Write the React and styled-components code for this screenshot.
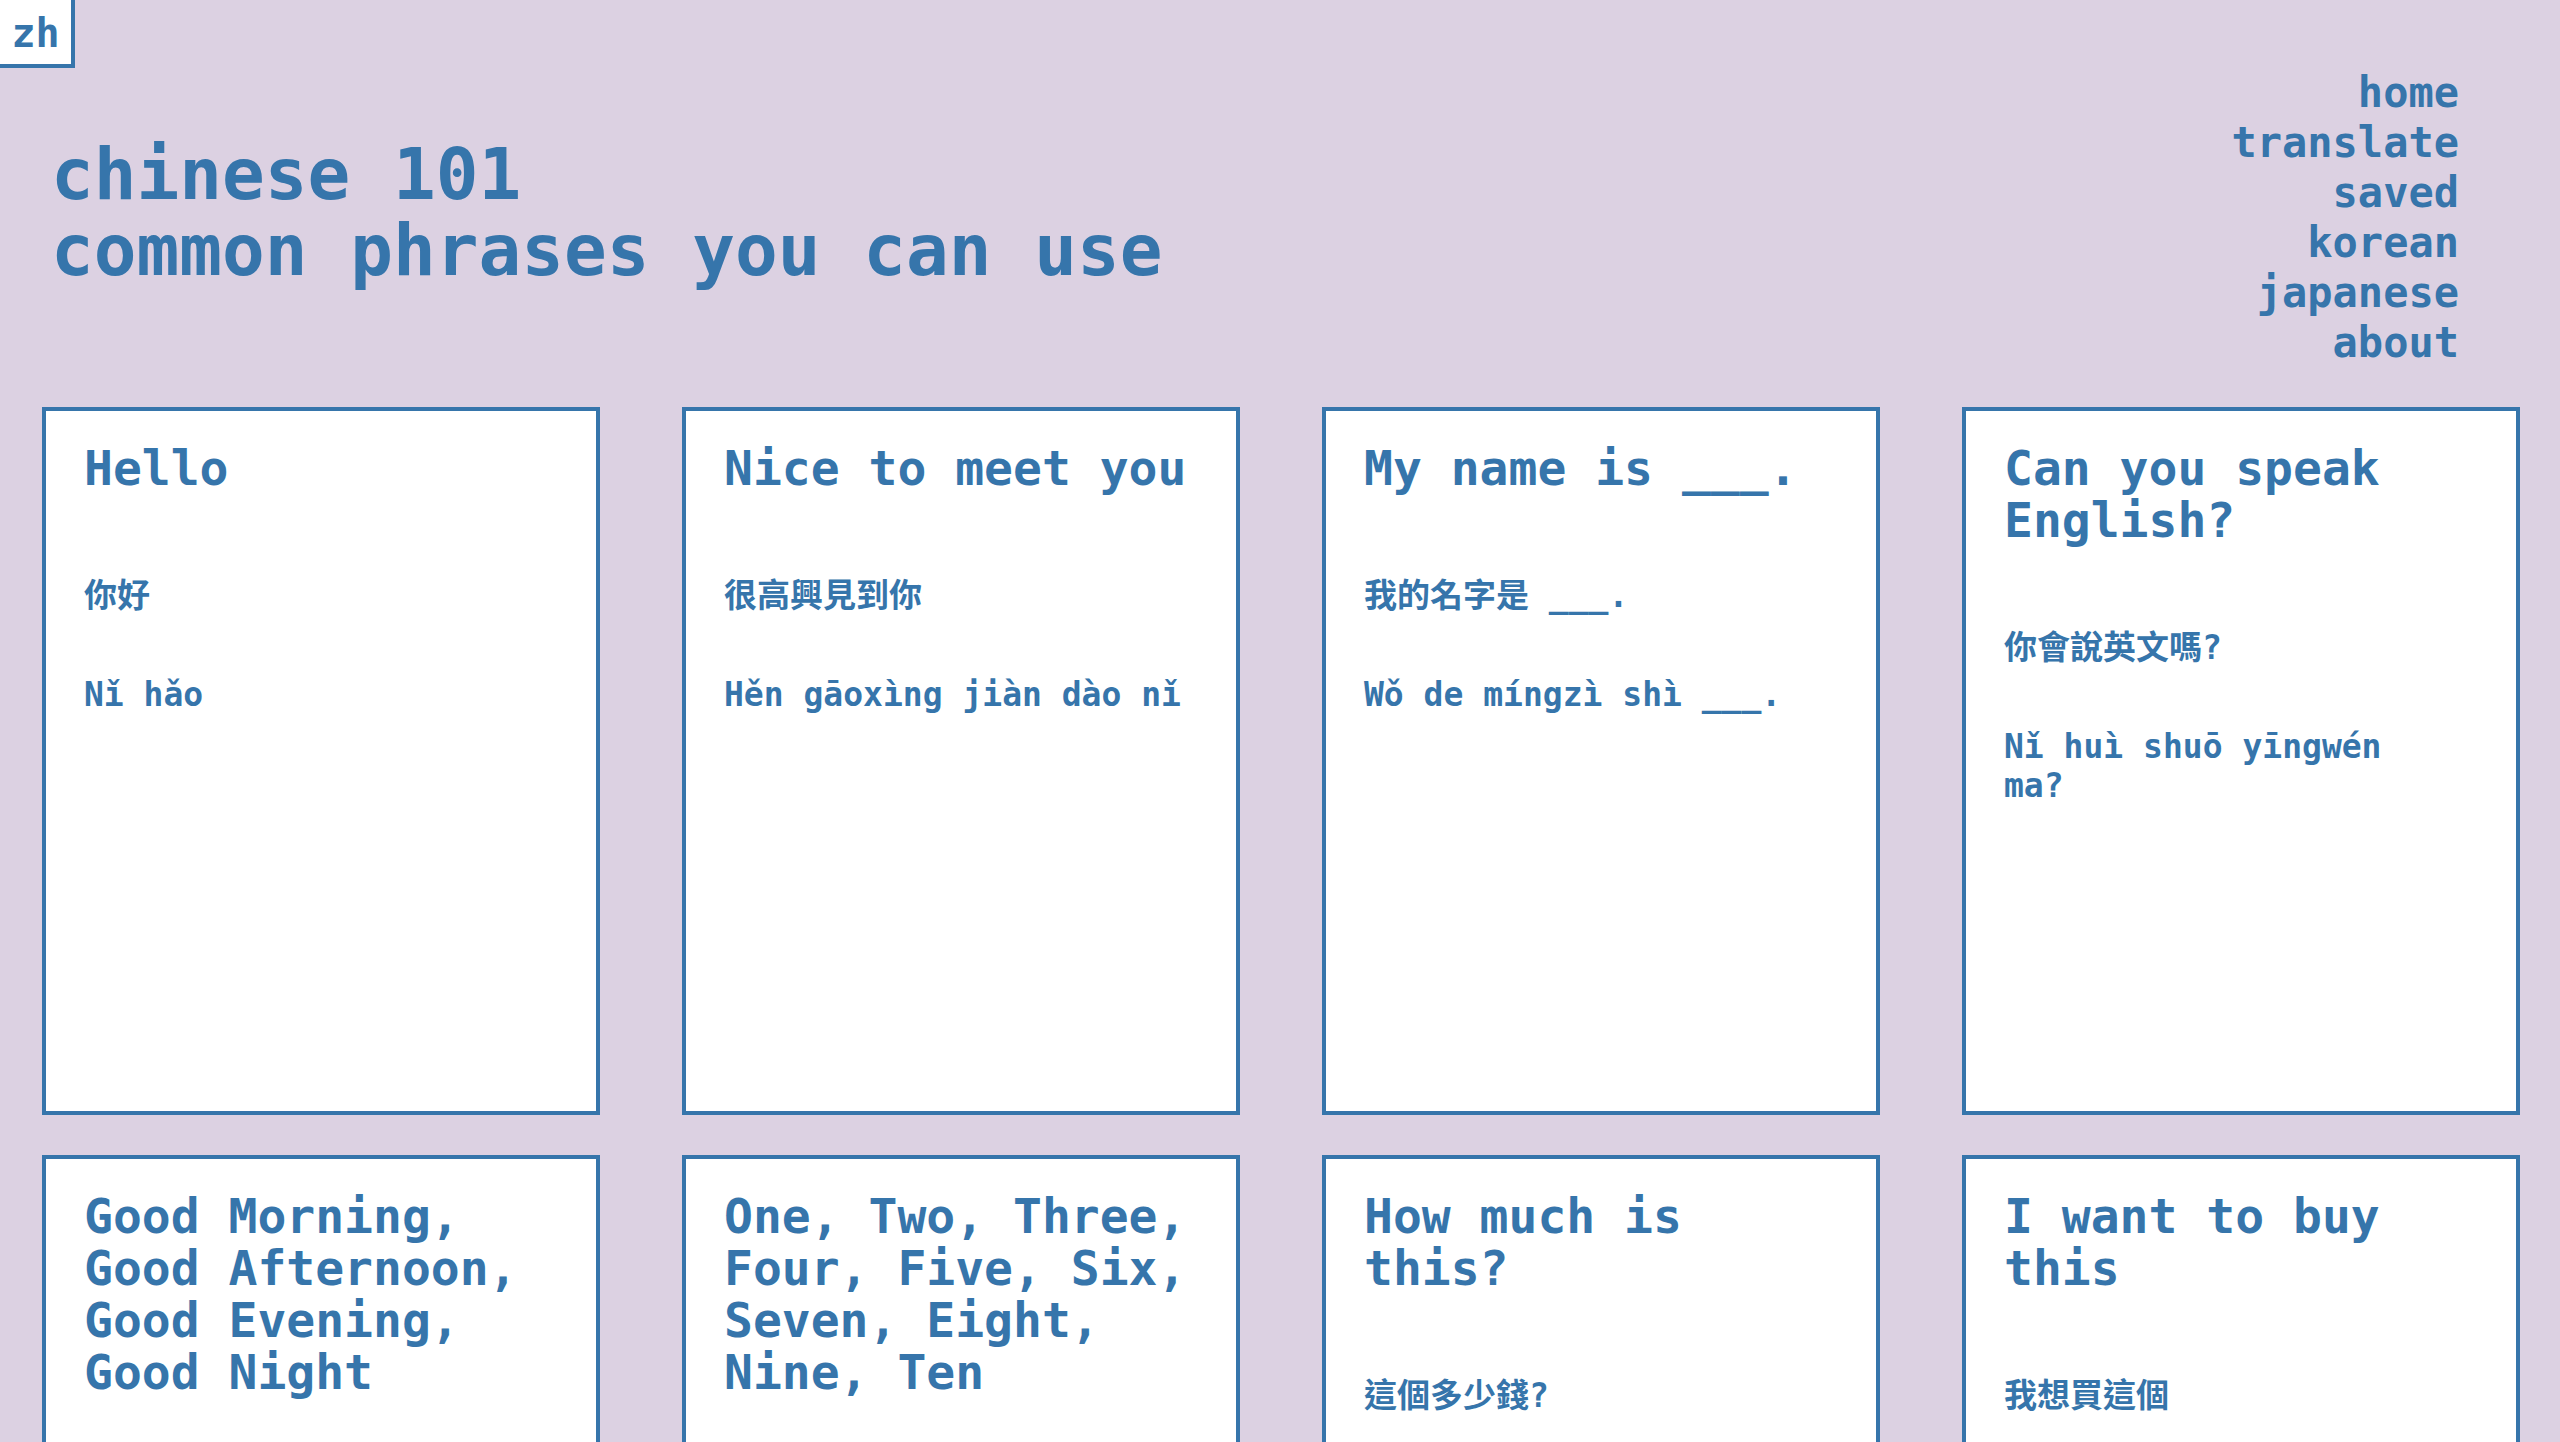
import React from 'react';
import styled, { createGlobalStyle } from 'styled-components';

const blue = '#3675ab';
const lavender = '#dcd1e2';
const mono = '"DejaVu Sans Mono", "Noto Sans CJK TC", monospace';

const GlobalStyle = createGlobalStyle`
  html {
    scrollbar-width: none;
  }
  body {
    margin: 0;
    background: ${lavender};
    font-family: ${mono};
    font-weight: 700;
    color: ${blue};
  }
`;

const Page = styled.div`
  min-height: 100vh;
  padding-bottom: 40px;
`;

const Header = styled.header`
  display: flex;
  justify-content: space-between;
  align-items: flex-start;
`;

const Intro = styled.div`
  display: flex;
  flex-direction: column;
`;

const LangBadge = styled.div`
  box-sizing: border-box;
  width: 75px;
  height: 68px;
  padding-top: 2px;
  display: flex;
  align-items: center;
  justify-content: center;
  background: #fff;
  border-right: 4px solid ${blue};
  border-bottom: 4px solid ${blue};
  font-size: 40px;
  line-height: 42px;
`;

const Title = styled.h1`
  margin: 69px 0 0 51px;
  font-size: 71px;
  line-height: 76px;
  font-weight: 700;
`;

const Nav = styled.nav`
  display: flex;
  flex-direction: column;
  align-items: flex-end;
  margin: 68px 101px 0 0;
`;

const NavLink = styled.a`
  color: ${blue};
  text-decoration: none;
  font-size: 42px;
  line-height: 50px;
`;

const Grid = styled.main`
  display: grid;
  grid-template-columns: repeat(4, 558px);
  column-gap: 82px;
  row-gap: 40px;
  margin: 39px 0 0 42px;
`;

const Card = styled.article`
  box-sizing: border-box;
  height: 708px;
  padding: 31px 41px 0 38px;
  background: #fff;
  border: 4px solid ${blue};
`;

const Phrase = styled.h2`
  margin: 0;
  font-size: 48px;
  line-height: 52px;
  font-weight: 700;
`;

const Hanzi = styled.p`
  margin: 82px 0 0;
  font-size: 33px;
  line-height: 40px;
`;

const Pinyin = styled.p`
  margin: 59px 0 0;
  font-size: 33px;
  line-height: 39px;
  white-space: pre-line;
`;

const phrases = [
  { en: 'Hello', zh: '你好', py: 'Nǐ hǎo' },
  { en: 'Nice to meet you', zh: '很高興見到你', py: 'Hěn gāoxìng jiàn dào nǐ' },
  { en: 'My name is ___.', zh: '我的名字是 ___.', py: 'Wǒ de míngzì shì ___.' },
  { en: 'Can you speak English?', zh: '你會說英文嗎?', py: 'Nǐ huì shuō yīngwén\nma?' },
  {
    en: 'Good Morning, Good Afternoon, Good Evening, Good Night',
    zh: '早安, 午安, 晚上好, 晚安',
    py: 'Zǎo ān, wǔ ān, wǎnshàng hǎo, wǎn ān',
  },
  {
    en: 'One, Two, Three, Four, Five, Six, Seven, Eight, Nine, Ten',
    zh: '一, 二, 三, 四, 五, 六, 七, 八, 九, 十',
    py: 'Yī, èr, sān, sì, wǔ, liù, qī, bā, jiǔ, shí',
  },
  { en: 'How much is this?', zh: '這個多少錢?', py: 'Zhège duōshǎo qián?' },
  { en: 'I want to buy this', zh: '我想買這個', py: 'Wǒ xiǎng mǎi zhège' },
];

const navItems = ['home', 'translate', 'saved', 'korean', 'japanese', 'about'];

export default function App() {
  return (
    <Page>
      <GlobalStyle />
      <Header>
        <Intro>
          <LangBadge>zh</LangBadge>
          <Title>
            chinese 101
            <br />
            common phrases you can use
          </Title>
        </Intro>
        <Nav>
          {navItems.map((item) => (
            <NavLink key={item} href="#">
              {item}
            </NavLink>
          ))}
        </Nav>
      </Header>

      <Grid>
        {phrases.map((p) => (
          <Card key={p.en}>
            <Phrase>{p.en}</Phrase>
            <Hanzi>{p.zh}</Hanzi>
            <Pinyin>{p.py}</Pinyin>
          </Card>
        ))}
      </Grid>
    </Page>
  );
}
